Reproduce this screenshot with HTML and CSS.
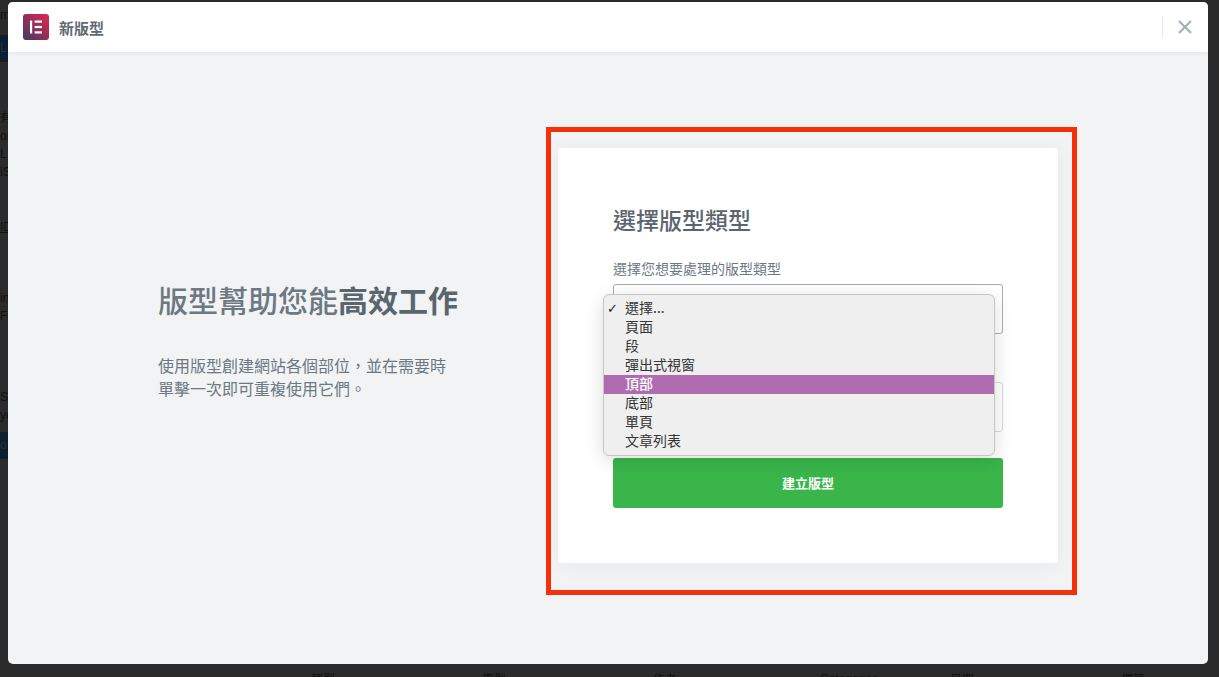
FILE: index.html
```html
<!DOCTYPE html>
<html lang="zh-Hant">
<head>
    <meta charset="UTF-8">
    <meta name="viewport" content="width=device-width, initial-scale=1.0">
    <title>新版型</title>
    <link rel="stylesheet" href="styles.css">
</head>
<body>
    <!-- page behind the modal, only its edges show -->
    <div class="backdrop">
        <div class="side-bits">
            <span class="bit bit-first">m</span>
            <span class="bit bit-navy">L</span>
            <span class="bit bit-gap">有</span>
            <span class="bit">or</span>
            <span class="bit">L</span>
            <span class="bit">iS</span>
            <span class="bit bit-gap2 bit-line">ID</span>
            <span class="bit bit-gap3">in</span>
            <span class="bit">Fi</span>
            <span class="bit bit-gap4">St</span>
            <span class="bit">yo</span>
            <span class="bit bit-navy bit-low">o</span>
        </div>
        <div class="table-head">
            <span>類型</span>
            <span>專型</span>
            <span>作者</span>
            <span>Categories</span>
            <span>日期</span>
            <span>標籤</span>
        </div>
    </div>

    <div class="modal">
        <div class="modal-header">
            <div class="brand">
                <svg class="brand-logo" viewBox="0 0 26 26" width="26" height="26">
                    <defs>
                        <linearGradient id="logoGrad" x1="0" y1="1" x2="1" y2="0">
                            <stop offset="0" stop-color="#3f3a66"/>
                            <stop offset="1" stop-color="#e5254f"/>
                        </linearGradient>
                    </defs>
                    <rect width="26" height="26" rx="3" fill="url(#logoGrad)"/>
                    <rect x="7" y="6.5" width="2.2" height="13" fill="#fff"/>
                    <rect x="11.6" y="6.5" width="7.4" height="2.2" fill="#fff"/>
                    <rect x="11.6" y="11.9" width="7.4" height="2.2" fill="#fff"/>
                    <rect x="11.6" y="17.3" width="7.4" height="2.2" fill="#fff"/>
                </svg>
                <span class="brand-title">新版型</span>
            </div>
            <div class="header-tools">
                <svg class="close-icon" viewBox="0 0 14 14" width="14" height="14">
                    <path d="M1 1 13 13M13 1 1 13" stroke="#a4afb7" stroke-width="2.2" fill="none"/>
                </svg>
            </div>
        </div>

        <div class="modal-body">
            <div class="intro">
                <h1 class="intro-title">版型幫助您能<strong>高效工作</strong></h1>
                <p class="intro-text">使用版型創建網站各個部位，並在需要時<br>單擊一次即可重複使用它們。</p>
            </div>

            <div class="form-card">
                <h2 class="form-title">選擇版型類型</h2>
                <label class="form-label">選擇您想要處理的版型類型</label>
                <div class="select-wrap">
                    <div class="field field-select"></div>
                    <ul class="menu">
                        <li class="menu-item"><span class="check">✓</span>選擇...</li>
                        <li class="menu-item">頁面</li>
                        <li class="menu-item">段</li>
                        <li class="menu-item">彈出式視窗</li>
                        <li class="menu-item active">頂部</li>
                        <li class="menu-item">底部</li>
                        <li class="menu-item">單頁</li>
                        <li class="menu-item">文章列表</li>
                    </ul>
                </div>
                <div class="field field-name"></div>
                <button class="submit-btn">建立版型</button>
            </div>

            <!-- red annotation box drawn on the screenshot -->
            <div class="annotation"></div>
        </div>
    </div>
</body>
</html>
```

FILE: styles.css
```css
* {
    box-sizing: border-box;
}

html, body {
    margin: 0;
    height: 677px;
    overflow: hidden;
}

body {
    font-family: "Noto Sans CJK TC", "Noto Sans", sans-serif;
    background: #2b2b2b;
    position: relative;
}

/* page behind */
.backdrop {
    height: 677px;
    position: relative;
    overflow: hidden;
}

.side-bits {
    width: 8px;
    display: flex;
    flex-direction: column;
    overflow: hidden;
    font-family: "Liberation Sans", "Noto Sans CJK TC", sans-serif;
    font-size: 12px;
    line-height: 18px;
    color: #111;
}

.bit {
    display: block;
    white-space: nowrap;
    flex: none;
}

.bit-first {
    margin-top: 6px;
}

.bit-navy {
    background: #0c1f2e;
    color: #24343f;
    height: 27px;
    line-height: 27px;
    margin-top: 11px;
}

.bit-gap {
    margin-top: 47px;
}

.bit-gap2 {
    margin-top: 37px;
}

.bit-line {
    text-decoration: underline;
}

.bit-gap3 {
    margin-top: 53px;
}

.bit-gap4 {
    margin-top: 63px;
}

.bit-low {
    margin-top: 8px;
}

.table-head {
    height: 16px;
    display: flex;
    font-size: 12px;
    line-height: 16px;
    color: #111;
    padding-left: 311px;
    position: absolute;
    top: 671px;
    left: 0;
    right: 0;
}

.table-head span {
    flex: none;
}

.table-head span:nth-child(1) { width: 171px; }
.table-head span:nth-child(2) { width: 171px; }
.table-head span:nth-child(3) { width: 167px; }
.table-head span:nth-child(4) { width: 130px; font-family: "Liberation Sans", sans-serif; }
.table-head span:nth-child(5) { width: 171px; }

/* modal */
.modal {
    position: absolute;
    top: 2px;
    left: 8px;
    width: 1200px;
    height: 662px;
    background: #f1f3f5;
    border-radius: 5px;
    overflow: hidden;
}

.modal-header {
    height: 50px;
    background: #fff;
    display: flex;
    align-items: center;
    justify-content: space-between;
    padding: 0 16px 0 15px;
    box-shadow: 0 0 4px rgba(0, 0, 0, 0.1);
    position: relative;
}

.brand {
    display: flex;
    align-items: center;
    gap: 10px;
}

.brand-logo {
    display: block;
}

.brand-title {
    font-size: 15px;
    font-weight: 700;
    color: #5f6a72;
}

.header-tools {
    display: flex;
    align-items: center;
    height: 22px;
    padding-left: 15px;
    border-left: 1px solid #e6e8ea;
}

.close-icon {
    display: block;
}

.modal-body {
    height: 612px;
    position: relative;
    display: flex;
    padding: 96px 0 0 150px;
}

.intro {
    width: 400px;
    padding-top: 130px;
}

.intro-title {
    margin: 0;
    font-size: 30px;
    line-height: 42px;
    font-weight: 500;
    color: #6d7882;
}

.intro-title strong {
    font-weight: 700;
    color: #5a656d;
}

.intro-text {
    margin: 34px 0 0;
    font-size: 16px;
    line-height: 23px;
    color: #6d7882;
}

/* form card */
.form-card {
    width: 500px;
    height: 415px;
    background: #fff;
    border-radius: 3px;
    padding: 55px 55px 0;
    box-shadow: 0 2px 20px rgba(0, 0, 0, 0.05);
}

.form-title {
    margin: 0;
    font-size: 23px;
    line-height: 32px;
    font-weight: 500;
    color: #5a656d;
}

.form-label {
    display: block;
    margin-top: 23px;
    font-size: 14px;
    line-height: 20px;
    color: #6d7882;
}

.select-wrap {
    position: relative;
    margin-top: 6px;
}

.field {
    width: 390px;
    height: 50px;
    border: 1px solid #d5dadf;
    border-radius: 3px;
    background: #fff;
}

.field-select {
    border-color: #a9adb1;
}

.field-name {
    margin-top: 48px;
}

.menu {
    position: absolute;
    top: 10px;
    left: -10px;
    width: 392px;
    height: 162px;
    margin: 0;
    padding: 4px 0;
    list-style: none;
    background: #efefef;
    border: 1px solid #c6c6c6;
    border-radius: 6px;
    box-shadow: 0 4px 18px rgba(0, 0, 0, 0.14);
    z-index: 2;
}

.menu-item {
    position: relative;
    height: 19px;
    line-height: 17px;
    padding-left: 21px;
    font-size: 14px;
    color: #333;
}

.menu-item.active {
    background: #b06cb0;
    color: #fff;
    font-weight: 500;
}

.check {
    position: absolute;
    left: 3px;
    top: 1px;
    font-size: 13px;
    font-weight: 700;
    font-family: "DejaVu Sans", sans-serif;
    color: #222;
}

.submit-btn {
    display: block;
    width: 390px;
    height: 50px;
    margin-top: 26px;
    padding: 0 0 2px;
    border: 0;
    border-radius: 3px;
    background: #39b54a;
    color: #fff;
    font-family: inherit;
    font-size: 13px;
    font-weight: 700;
}

.annotation {
    position: absolute;
    top: 75px;
    left: 538px;
    width: 531px;
    height: 468px;
    border: 5px solid #f52f0a;
}
```
